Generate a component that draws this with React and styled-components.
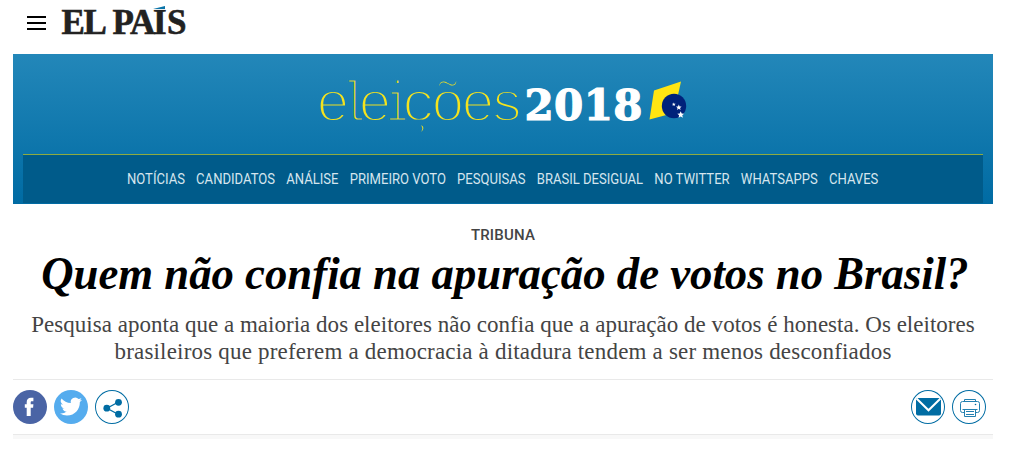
import React from "react";
import styled, { createGlobalStyle } from "styled-components";

const sections = [
  "NOTÍCIAS",
  "CANDIDATOS",
  "ANÁLISE",
  "PRIMEIRO VOTO",
  "PESQUISAS",
  "BRASIL DESIGUAL",
  "NO TWITTER",
  "WHATSAPPS",
  "CHAVES",
];

const starPath =
  "M0-3.2 .9-1.1 3.1-1 1.4.5 2 2.7 0 1.5-2 2.7-1.4.5-3.1-1-.9-1.1Z";

const Logo = () => (
  <svg width="130" height="46" viewBox="60 0 130 46">
    <LogoText x="61.5 83.500 107 112.500 130 153 167" y="34">
      EL PAÍS
    </LogoText>
    {/* the accent is a blue wedge */}
    <path d="M150 0h18v9.700h-18Z" fill="#fff" />
    <path d="M153 9 165 6v3Z" fill="#0a74a8" />
  </svg>
);

const Elections = () => (
  <svg width="380" height="84" viewBox="315 62 380 84">
    <defs>
      <linearGradient
        id="sky"
        gradientUnits="userSpaceOnUse"
        x1="0"
        y1="54"
        x2="0"
        y2="204"
      >
        <stop offset="0" stopColor="#2387b9" />
        <stop offset="1" stopColor="#006ba3" />
      </linearGradient>
    </defs>
    <ThinWord y="120.500">
      <tspan x="315.500">e</tspan>
      <tspan x="343.500" textLength="21" lengthAdjust="spacingAndGlyphs">
        l
      </tspan>
      <tspan x="357.500">e</tspan>
      <tspan x="386.500" textLength="21" lengthAdjust="spacingAndGlyphs">
        i
      </tspan>
      <tspan x="401.500 430.500 460.500 489.500">ções</tspan>
    </ThinWord>
    <Year x="524.500" y="119.700" textLength="118">
      2018
    </Year>
    <path d="M654 90.500 681 81.500 674 113 649.500 119.500Z" fill="#ffe512" />
    <circle cx="674" cy="106" r="12.200" fill="#00227a" />
    <g fill="#fff">
      <path d={starPath} transform="translate(673.8 104.4) scale(.6)" />
      <path d={starPath} transform="translate(678.800 107.500) scale(.9)" />
      <path d={starPath} transform="translate(680.700 114.800) scale(1.1)" />
    </g>
  </svg>
);

const App = () => {
  return (
    <>
      <GlobalStyle />
      <Page>
        <Header>
          <MenuButton aria-label="Menu">
            <Bar />
            <Bar />
            <Bar />
          </MenuButton>
          <Logo />
        </Header>
        <Banner>
          <BannerTitle>
            <Elections />
          </BannerTitle>
          <Nav>
            <NavList>
              {sections.map((name) => (
                <NavItem key={name}>{name}</NavItem>
              ))}
            </NavList>
          </Nav>
        </Banner>
        <Kicker>TRIBUNA</Kicker>
        <Headline>Quem não confia na apuração de votos no Brasil?</Headline>
        <Summary>
          <SummaryLine>
            Pesquisa aponta que a maioria dos eleitores não confia que a
            apuração de votos é honesta. Os eleitores
          </SummaryLine>
          <SummaryLine $spacing="0.19px">
            brasileiros que preferem a democracia à ditadura tendem a ser menos
            desconfiados
          </SummaryLine>
        </Summary>
        <ShareBar>
          <Group>
            <RoundButton $fill="#4a64a5" aria-label="Facebook">
              <svg width="34" height="34" viewBox="0 0 34 34">
                <path
                  d="M13.700 26v-8.300h-1.900v-3.400h1.900v-2c0-3 1.500-4.500 4.300-4.500h2.400v3.400H19c-1 0-1.300.5-1.300 1.300v1.800h2.700l-.3 3.400h-2.400V26Z"
                  fill="#fff"
                />
              </svg>
            </RoundButton>
            <RoundButton $fill="#55acee" aria-label="Twitter">
              <svg width="34" height="34" viewBox="0 0 34 34">
                <path
                  transform="translate(6 5.500) scale(.92)"
                  d="M23.950 4.570a10 10 0 0 1-2.820.77 4.960 4.960 0 0 0 2.160-2.720c-.95.550-2 .950-3.130 1.180a4.920 4.920 0 0 0-8.380 4.480C7.690 8.100 4.070 6.130 1.640 3.160a4.900 4.900 0 0 0 1.520 6.570 4.900 4.900 0 0 1-2.230-.61v.06a4.920 4.920 0 0 0 3.950 4.830 5 5 0 0 1-2.210.08 4.940 4.940 0 0 0 4.600 3.420A9.870 9.870 0 0 1 0 19.540a13.990 13.990 0 0 0 7.550 2.210c9.050 0 14-7.500 14-13.980 0-.21 0-.42-.02-.63a9.940 9.940 0 0 0 2.420-2.570Z"
                  fill="#fff"
                />
              </svg>
            </RoundButton>
            <RoundButton aria-label="Compartilhar">
              <svg width="34" height="34" viewBox="0 0 34 34">
                <path
                  d="M23.500 12 12 18.200 23.500 24.500"
                  fill="none"
                  stroke="#006ca3"
                  strokeWidth="1.300"
                />
                <g fill="#006ca3">
                  <circle cx="23.500" cy="12.300" r="3.400" />
                  <circle cx="11.800" cy="18.200" r="3.400" />
                  <circle cx="23.500" cy="24.200" r="3.400" />
                </g>
              </svg>
            </RoundButton>
          </Group>
          <Group>
            <RoundButton aria-label="Enviar por e-mail">
              <svg width="34" height="34" viewBox="0 0 34 34">
                <rect
                  x="5"
                  y="8"
                  width="25"
                  height="17.500"
                  rx="2"
                  fill="#006ca3"
                />
                <path
                  d="M5.500 8.500 17.500 20.300 29.500 8.500"
                  fill="none"
                  stroke="#fff"
                  strokeWidth="2"
                />
              </svg>
            </RoundButton>
            <RoundButton aria-label="Imprimir">
              <svg width="34" height="34" viewBox="0 0 34 34">
                <g fill="none" stroke="#2380b0">
                  <path d="M12.500 11.500v-2h11v2" />
                  <path d="M12.500 22.500h-2a2 2 0 0 1-2-2v-7a2 2 0 0 1 2-2h15a2 2 0 0 1 2 2v7a2 2 0 0 1-2 2h-2" />
                  <path d="M10.500 19.500h15M12.500 19.500v7h11v-7M14 21.500h8M14 24.500h8" />
                </g>
                <circle cx="23.500" cy="14.500" r=".8" fill="#006ca3" />
              </svg>
            </RoundButton>
          </Group>
        </ShareBar>
        <Strip />
      </Page>
    </>
  );
};

const GlobalStyle = createGlobalStyle`
  body {
    margin: 0;
    background-color: white;
    overflow: hidden;
  }
`;

const Page = styled.div`
  width: 980px;
  height: 451px;
  margin-left: 13px;
`;

const Header = styled.header`
  display: flex;
  align-items: flex-start;
  height: 54px;
`;

const MenuButton = styled.button`
  display: flex;
  flex-direction: column;
  gap: 4px;
  padding: 16px 14px 0;
  border: 0;
  background: none;
`;

const Bar = styled.span`
  width: 19px;
  height: 2px;
  background-color: black;
`;

const LogoText = styled.text`
  font-family: "Liberation Serif", serif;
  font-size: 35px;
  font-weight: bold;
  fill: #222;
  stroke: #222;
  stroke-width: 0.6px;
`;

const Banner = styled.section`
  display: flex;
  flex-direction: column;
  height: 150px;
  padding: 0 10px 1px;
  box-sizing: border-box;
  background: linear-gradient(#2387b9, #006ba3);
`;

const BannerTitle = styled.div`
  height: 100px;
  padding: 8px 0 0 292px;
  box-sizing: border-box;
`;

/* the outline takes the banner colours and eats into the strokes */
const ThinWord = styled.text`
  font-family: "Liberation Mono", monospace;
  font-size: 58px;
  fill: #f5e31d;
  stroke: url(#sky);
  stroke-width: 2.8px;
`;

const Year = styled.text`
  font-family: "DejaVu Serif", serif;
  font-size: 42px;
  font-weight: bold;
  fill: white;
  stroke: white;
  stroke-width: 1.2px;
`;

const Nav = styled.nav`
  display: flex;
  flex: 1;
  align-items: center;
  justify-content: center;
  border-top: 1px solid #8fab3f;
  background-color: #005b8a;
`;

const NavList = styled.div`
  display: flex;
  gap: 12px;
  transform: scaleX(0.933);
`;

const NavItem = styled.a`
  font-family: Roboto, sans-serif;
  font-size: 14px;
  line-height: 16px;
  white-space: nowrap;
  color: #d5e5ee;
`;

const Kicker = styled.div`
  margin-top: 22px;
  font-family: Roboto, sans-serif;
  font-size: 15px;
  font-weight: 500;
  letter-spacing: 0.2px;
  line-height: 18px;
  text-align: center;
  color: #444;
`;

const Headline = styled.h1`
  margin: 3px 0 0;
  padding-left: 4px;
  font-family: "Liberation Serif", serif;
  font-size: 47px;
  font-style: italic;
  line-height: 52px;
  white-space: nowrap;
  text-align: center;
  color: black;
  transform: scaleX(0.952);
`;

const Summary = styled.h2`
  margin: 12px 0 0;
  font-family: "Liberation Serif", serif;
  font-size: 23px;
  font-weight: normal;
  line-height: 27px;
  text-align: center;
  color: #444;
`;

const SummaryLine = styled.span`
  display: block;
  white-space: nowrap;
  letter-spacing: ${({ $spacing }) => $spacing || "0.02px"};
`;

const ShareBar = styled.div`
  display: flex;
  align-items: center;
  justify-content: space-between;
  height: 56px;
  margin-top: 14px;
  padding-right: 7px;
  box-sizing: border-box;
  border-top: 1px solid #e9e9e9;
  border-bottom: 1px solid #e9e9e9;
`;

const Group = styled.div`
  display: flex;
  gap: 7px;
`;

const RoundButton = styled.button`
  display: flex;
  width: 34px;
  height: 34px;
  padding: 0;
  border: 0;
  border-radius: 50%;
  background-color: ${({ $fill }) => $fill || "white"};
  box-shadow: ${({ $fill }) => ($fill ? "none" : "inset 0 0 0 1px #006ca3")};
`;

const Strip = styled.div`
  height: 4px;
  background-color: #f8f8f8;
`;

export default App;
